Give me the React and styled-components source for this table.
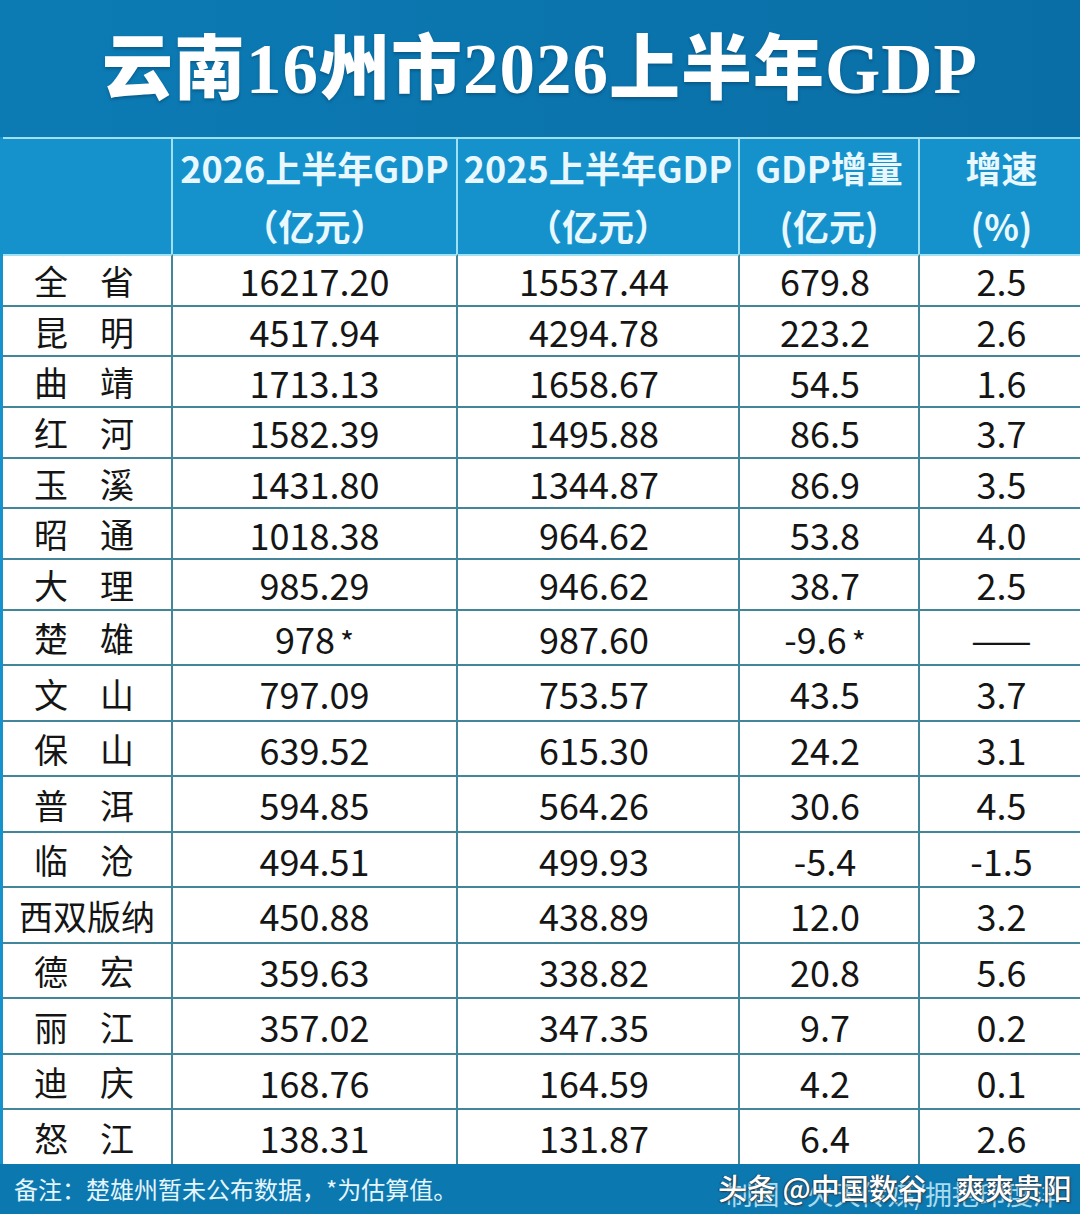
import styled, { createGlobalStyle } from 'styled-components';

const GlobalStyle = createGlobalStyle`
  html, body {
    margin: 0;
    padding: 0;
    background: #ffffff;
  }
  * {
    box-sizing: border-box;
  }
`;

const colors = {
  title: '#0c7bb4',
  titleDark: '#0a6ea6',
  header: '#1592cc',
  headerLine: '#9fe0f2',
  headerText: '#e9f8ff',
  rowLine: '#43869a',
  text: '#151515',
  footer: '#0c78b0',
};

const CJK = `"Noto Sans CJK SC", "Noto Sans", sans-serif`;

const Page = styled.div`
  width: 1080px;
  height: 1214px;
  display: flex;
  flex-direction: column;
  font-family: ${CJK};
  overflow: hidden;
`;

const TitleBar = styled.header`
  height: 137px;
  display: flex;
  align-items: center;
  justify-content: center;
  background: linear-gradient(90deg, ${colors.title}, ${colors.titleDark});
  padding-bottom: 14px;

  h1 {
    margin: 0;
    font-family: "Liberation Serif", "Noto Sans CJK SC", serif;
    font-size: 71px;
    font-weight: 900;
    color: #ffffff;
    letter-spacing: 1px;
    text-shadow: 0 2px 3px rgba(0, 40, 70, 0.35);
  }
`;

const Grid = styled.div`
  display: grid;
  grid-template-columns: 170px 285px 282px 180px 163px;
  border-left: 3px solid ${colors.header};
  border-right: 3px solid ${colors.header};
`;

const HeadCell = styled.div`
  height: 117px;
  background: ${colors.header};
  border-top: 2px solid ${colors.headerLine};
  border-right: ${(p) => (p.$last ? 'none' : `2px solid ${colors.headerLine}`)};
  color: ${colors.headerText};
  font-weight: 700;
  font-size: 36px;
  line-height: 58px;
  text-align: center;
  white-space: nowrap;
  display: flex;
  flex-direction: column;
  justify-content: center;
  padding-bottom: 2px;
`;

const Cell = styled.div`
  height: ${(p) => p.$h}px;
  background: #ffffff;
  border-top: 2px solid ${(p) => (p.$first ? colors.headerLine : colors.rowLine)};
  border-right: ${(p) => (p.$last ? 'none' : `2px solid ${colors.rowLine}`)};
  display: flex;
  align-items: center;
  justify-content: center;
  color: ${colors.text};
  font-size: 36px;
  white-space: nowrap;
  padding-right: ${(p) => p.$pad || 0}px;
`;

const Name = styled.span`
  width: ${(p) => (p.$wide ? 'auto' : '100px')};
  display: flex;
  justify-content: space-between;
  font-size: 34px;
`;

const Star = styled.span`
  font-size: 30px;
  margin-left: 5px;
`;

const Footer = styled.footer`
  position: relative;
  flex: 1;
  background: ${colors.footer};
  display: flex;
  align-items: center;
  justify-content: space-between;
  padding: 0 20px 0 14px;
`;

const Note = styled.span`
  color: #e4f5fc;
  font-size: 24px;
`;

const Credit = styled.span`
  color: #a9dcef;
  font-size: 27px;
  margin-top: 10px;
`;

const Watermark = styled.span`
  position: absolute;
  left: 718px;
  top: 2px;
  color: #ffffff;
  font-size: 29px;
  font-weight: 500;
  text-shadow: 1px 1px 2px #2b3a44, -1px 0 1px #2b3a44;
  white-space: nowrap;
`;

const rows = [
  ['全省', '16217.20', '15537.44', '679.8', '2.5'],
  ['昆明', '4517.94', '4294.78', '223.2', '2.6'],
  ['曲靖', '1713.13', '1658.67', '54.5', '1.6'],
  ['红河', '1582.39', '1495.88', '86.5', '3.7'],
  ['玉溪', '1431.80', '1344.87', '86.9', '3.5'],
  ['昭通', '1018.38', '964.62', '53.8', '4.0'],
  ['大理', '985.29', '946.62', '38.7', '2.5'],
  ['楚雄', '978*', '987.60', '-9.6*', '——'],
  ['文山', '797.09', '753.57', '43.5', '3.7'],
  ['保山', '639.52', '615.30', '24.2', '3.1'],
  ['普洱', '594.85', '564.26', '30.6', '4.5'],
  ['临沧', '494.51', '499.93', '-5.4', '-1.5'],
  ['西双版纳', '450.88', '438.89', '12.0', '3.2'],
  ['德宏', '359.63', '338.82', '20.8', '5.6'],
  ['丽江', '357.02', '347.35', '9.7', '0.2'],
  ['迪庆', '168.76', '164.59', '4.2', '0.1'],
  ['怒江', '138.31', '131.87', '6.4', '2.6'],
];

function Value({ text }) {
  if (text.endsWith('*')) {
    return (
      <span>
        {text.slice(0, -1)}
        <Star>*</Star>
      </span>
    );
  }
  return text;
}

function Row({ data, index }) {
  const h = index < 7 ? 50.7 : 55.5;
  const [name, ...vals] = data;
  return (
    <>
      <Cell $h={h} $first={index === 0} $pad={name.length > 2 ? 0 : 6}>
        <Name $wide={name.length > 2}>
          {name.split('').map((c) => (
            <span key={c}>{c}</span>
          ))}
        </Name>
      </Cell>
      {vals.map((v, i) => (
        <Cell key={i} $h={h} $first={index === 0} $last={i === 3} $pad={i === 1 || i === 2 ? 8 : 0}>
          <Value text={v} />
        </Cell>
      ))}
    </>
  );
}

export default function App() {
  return (
    <Page>
      <GlobalStyle />
      <TitleBar>
        <h1>云南16州市2026上半年GDP</h1>
      </TitleBar>
      <Grid>
        <HeadCell />
        <HeadCell>
          <span>2026上半年GDP</span>
          <span>（亿元）</span>
        </HeadCell>
        <HeadCell>
          <span>2025上半年GDP</span>
          <span>（亿元）</span>
        </HeadCell>
        <HeadCell>
          <span>GDP增量</span>
          <span>(亿元)</span>
        </HeadCell>
        <HeadCell $last>
          <span>增速</span>
          <span>(%)</span>
        </HeadCell>
        {rows.map((r, i) => (
          <Row key={r[0]} data={r} index={i} />
        ))}
      </Grid>
      <Footer>
        <Note>备注：楚雄州暂未公布数据，*为估算值。</Note>
        <Credit>制图：火天传媒/拥抱印度洋</Credit>
        <Watermark>头条 @中国数谷　爽爽贵阳</Watermark>
      </Footer>
    </Page>
  );
}
